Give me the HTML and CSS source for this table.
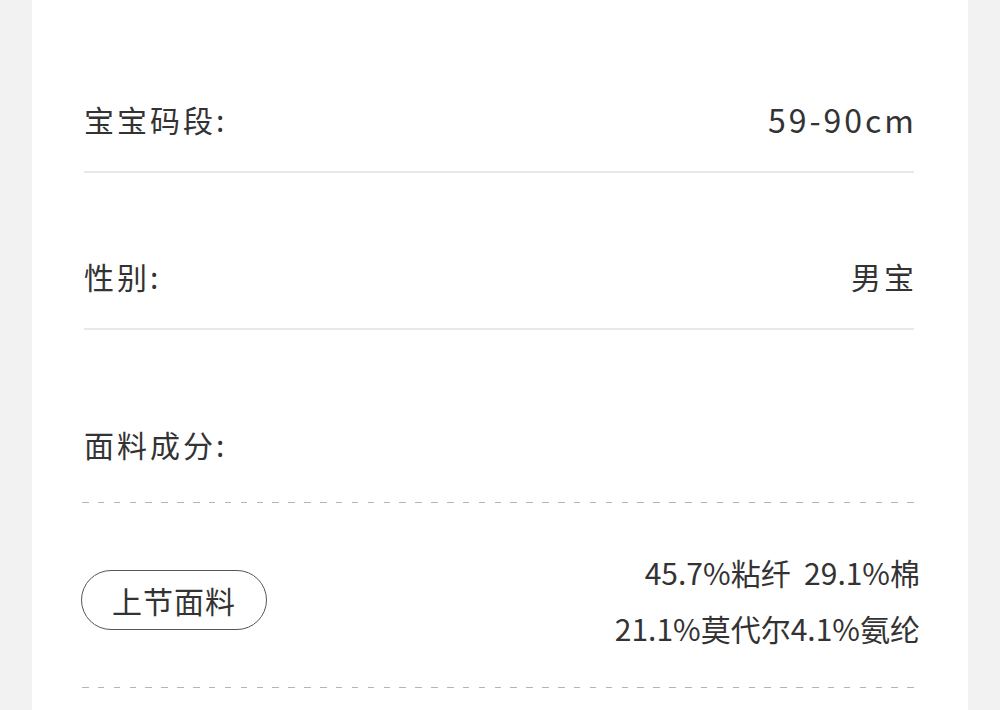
FILE: index.html
```html
<!DOCTYPE html>
<html lang="zh-CN">
<head>
    <meta charset="UTF-8">
    <meta name="viewport" content="width=device-width, initial-scale=1.0">
    <title>商品参数</title>
    <link rel="stylesheet" href="styles.css">
</head>
<body>
    <div class="card">
        <div class="spec-row first">
            <span class="spec-label">宝宝码段:</span>
            <span class="spec-value">59-90cm</span>
        </div>

        <div class="spec-row">
            <span class="spec-label">性别:</span>
            <span class="spec-value">男宝</span>
        </div>

        <!-- 面料成分 -->
        <div class="spec-row fabric-title">
            <span class="spec-label">面料成分:</span>
        </div>
        <div class="dash"></div>

        <div class="fabric-row">
            <span class="fabric-tag">上节面料</span>
            <div class="fabric-text">
                <div>45.7%粘纤&nbsp; 29.1%棉</div>
                <div>21.1%莫代尔4.1%氨纶</div>
            </div>
        </div>
        <div class="dash"></div>
    </div>
</body>
</html>
```

FILE: styles.css
```css
body {
    margin: 0;
    background-color: #f2f2f2;
    font-family: "Noto Sans CJK SC", "Noto Sans", sans-serif;
    color: #333;
}
.card {
    width: 936px;
    margin: 0 auto 0 32px;
    padding: 15px 54px 0 52px;
    box-sizing: border-box;
    background-color: #fff;
    min-height: 710px;
}
.spec-row {
    display: flex;
    justify-content: space-between;
    align-items: center;
    height: 32px;
    padding: 88px 0 36px;
    border-bottom: 2px solid #e8e8e8;
    font-size: 30px;
    line-height: 32px;
}
.spec-row + .spec-row {
    padding-top: 87px;
}
.spec-label {
    letter-spacing: 3px;
}
.spec-value {
    letter-spacing: 3px;
    margin-right: -3px;
}
.spec-row.first .spec-value {
    font-size: 32px;
}
.fabric-title {
    border-bottom: none;
}
.spec-row.fabric-title {
    padding: 98px 0 42px;
}
.dash {
    height: 1px;
    margin-left: -2px;
    background-image: repeating-linear-gradient(to right, #b4b4b4 0, #b4b4b4 6.5px, transparent 6.5px, transparent 15.87px);
}
.fabric-row {
    display: flex;
    justify-content: space-between;
    align-items: center;
    padding: 41px 0 31px;
    margin: 0 -6px 0 -3px;
}
.fabric-tag {
    display: flex;
    align-items: center;
    justify-content: center;
    width: 186px;
    height: 60px;
    box-sizing: border-box;
    border: 1px solid #555;
    border-radius: 30px;
    font-size: 30px;
    letter-spacing: 1px;
}
.fabric-text {
    text-align: right;
    font-size: 30px;
    line-height: 56px;
}
```
